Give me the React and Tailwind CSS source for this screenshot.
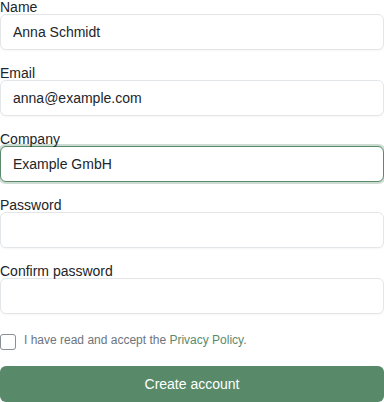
import React, { useState } from 'react';

const Field = ({ label, type = 'text', value, focused }) => (
  <div className="mb-4">
    <label className="block text-sm leading-[14px] text-[#212529]">{label}</label>
    <input
      type={type}
      defaultValue={value}
      className={`block w-full h-9 px-3 rounded-md bg-white text-sm text-[#212529] outline-none border ${
        focused
          ? 'border-[#5b8a6b] shadow-[0_0_0_2px_rgba(91,138,107,0.3)]'
          : 'border-[#e3e6e9] shadow-[0_1px_2px_rgba(0,0,0,0.04)]'
      }`}
    />
  </div>
);

export default function App() {
  const [accepted, setAccepted] = useState(false);

  return (
    <div className="w-[384px] h-[402px] bg-white font-['Liberation_Sans',Arial,sans-serif] overflow-hidden">
      <Field label="Name" value="Anna Schmidt" />
      <Field label="Email" type="email" value="anna@example.com" />
      <Field label="Company" value="Example GmbH" focused />
      <Field label="Password" type="password" />
      <Field label="Confirm password" type="password" />

      <label className="flex items-start gap-2 mt-5 mb-4 cursor-pointer">
        <input
          type="checkbox"
          checked={accepted}
          onChange={(e) => setAccepted(e.target.checked)}
          className="appearance-none w-4 h-4 mt-0 rounded-[3px] border border-[#8a8f94] bg-white shrink-0"
        />
        <span className="text-xs leading-[12px] text-[#6c757d]">
          I have read and accept the <a href="#" className="text-[#5b8a6b]">Privacy Policy</a>.
        </span>
      </label>

      <button className="w-full h-9 rounded-md bg-[#588a69] text-white text-sm">Create account</button>
    </div>
  );
}
